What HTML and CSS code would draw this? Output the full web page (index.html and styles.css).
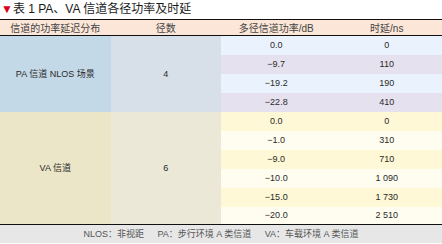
FILE: index.html
```html
<!DOCTYPE html>
<html lang="zh-CN">
<head>
    <meta charset="UTF-8">
    <title>表 1 PA、VA 信道各径功率及时延</title>
    <link rel="stylesheet" href="styles.css">
</head>
<body>
    <div class="caption"><span class="mark">▼</span>表 1 PA、VA 信道各径功率及时延</div>
    <table class="data">
        <thead>
            <tr>
                <th>信道的功率延迟分布</th>
                <th>径数</th>
                <th>多径信道功率/dB</th>
                <th>时延/ns</th>
            </tr>
        </thead>
        <tbody class="pa">
            <tr class="odd">
                <td class="name" rowspan="4">PA 信道 NLOS 场景</td>
                <td class="count" rowspan="4">4</td>
                <td>0.0</td><td>0</td>
            </tr>
            <tr class="even"><td>−9.7</td><td>110</td></tr>
            <tr class="odd"><td>−19.2</td><td>190</td></tr>
            <tr class="even"><td>−22.8</td><td>410</td></tr>
        </tbody>
        <tbody class="va">
            <tr class="odd">
                <td class="name" rowspan="6">VA 信道</td>
                <td class="count" rowspan="6">6</td>
                <td>0.0</td><td>0</td>
            </tr>
            <tr class="even"><td>−1.0</td><td>310</td></tr>
            <tr class="odd"><td>−9.0</td><td>710</td></tr>
            <tr class="even"><td>−10.0</td><td>1 090</td></tr>
            <tr class="odd"><td>−15.0</td><td>1 730</td></tr>
            <tr class="even last"><td>−20.0</td><td>2 510</td></tr>
        </tbody>
    </table>
    <div class="note">NLOS：非视距&emsp;&ensp;PA：步行环境 A 类信道&emsp;&ensp;VA：车载环境 A 类信道</div>
</body>
</html>
```
FILE: styles.css
```css
* {
    box-sizing: border-box;
    margin: 0;
    padding: 0;
}

body {
    width: 442px;
    height: 244px;
    background: #fff;
    font-family: "Liberation Sans", "Noto Sans CJK SC", sans-serif;
    color: #222;
    overflow: hidden;
}

.caption {
    height: 19px;
    line-height: 19px;
    font-size: 12px;
    padding-left: 1px;
    color: #1a1a1a;
    white-space: nowrap;
}

.mark {
    color: #d9001b;
    font-size: 12px;
}

.data {
    width: 442px;
    border-collapse: collapse;
    table-layout: fixed;
    border-top: 1px solid #111;
    border-bottom: 1px solid #111;
}

.data th,
.data td {
    width: 25%;
    text-align: center;
    vertical-align: middle;
    font-weight: normal;
    white-space: nowrap;
}

.data th {
    height: 15px;
    background: #fce6d8;
    font-size: 10px;
    color: #444;
    border-bottom: 1px solid #111;
}

.data td {
    height: 19px;
    font-size: 9px;
    color: #2a2a2a;
}

.pa .odd td { background: #eaf3fd; }
.pa .even td { background: #e6e1ef; }
.pa td.name { background: #c4d9e7; }
.pa td.count { background: #d7e0e8; }

.va .odd td { background: #fef8d6; }
.va .even td { background: #fffdf0; }
.va .last td { height: 18px; }
.va td.name { background: #ebe6c7; }
.va td.count { background: #ebe8d8; }

.note {
    height: 18px;
    line-height: 18px;
    background: #e7e7e7;
    text-align: center;
    font-size: 9px;
    color: #555;
    white-space: nowrap;
}
```
